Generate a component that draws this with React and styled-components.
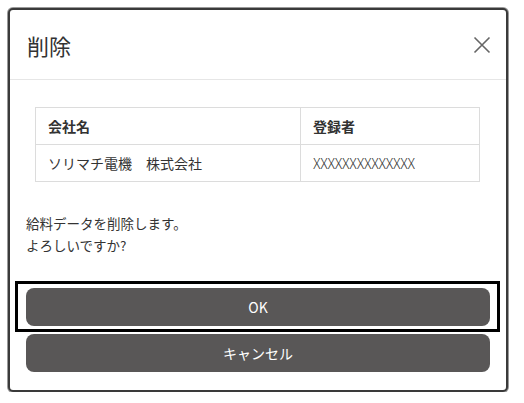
import React from 'react';
import styled, { createGlobalStyle } from 'styled-components';

const GlobalStyle = createGlobalStyle`
    html, body {
        margin: 0;
        padding: 0;
        background: #fff;
        font-family: "Noto Sans CJK JP", "Noto Sans", sans-serif;
        color: #333;
    }
`;

const Modal = styled.div`
    box-sizing: border-box;
    width: 500px;
    margin: 8px 0 0 8px;
    border: 2px solid #3a3a3a;
    border-radius: 5px;
    box-shadow: 0 0 0 1px #9a9a9a;
    background: #fff;
`;

const Header = styled.div`
    display: flex;
    align-items: center;
    justify-content: space-between;
    height: 69px;
    padding: 0 15px 0 17px;
    border-bottom: 1px solid #e6e6e6;
`;

const Title = styled.h2`
    margin: 0;
    font-size: 22px;
    font-weight: 400;
    color: #333;
`;

const CloseButton = styled.button`
    display: flex;
    padding: 0;
    border: none;
    background: none;
    cursor: pointer;
`;

const Body = styled.div`
    padding: 27px 16px 18px;
`;

const Table = styled.table`
    width: 445px;
    margin: 0 0 0 9px;
    border-collapse: collapse;
    font-size: 14px;
`;

const Th = styled.th`
    height: 36px;
    padding: 0 12px;
    border: 1px solid #dcdcdc;
    text-align: left;
    font-weight: 700;
    width: ${({ w }) => w || 'auto'};
`;

const Td = styled.td`
    height: 36px;
    padding: 0 12px;
    border: 1px solid #dcdcdc;
    font-weight: ${({ light }) => (light ? 300 : 400)};
    letter-spacing: ${({ light }) => (light ? '-0.3px' : '0')};
`;

const Message = styled.p`
    margin: 30px 0 32px;
    font-size: 13.5px;
    line-height: 22px;
`;

const Buttons = styled.div`
    display: flex;
    flex-direction: column;
    gap: 8px;
`;

const Button = styled.button`
    position: relative;
    height: 38px;
    border: none;
    border-radius: 8px;
    background: #595757;
    color: #fff;
    font-family: inherit;
    font-size: 14px;
    cursor: pointer;

    ${({ focused }) => focused && `
        &::after {
            content: '';
            position: absolute;
            top: -7px;
            bottom: -6px;
            left: -11px;
            right: -10px;
            border: 3px solid #000;
            pointer-events: none;
        }
    `}
`;

function DeleteDialog() {
    return (
        <Modal>
            <Header>
                <Title>削除</Title>
                <CloseButton aria-label="close">
                    <svg width="18" height="18" viewBox="0 0 18 18">
                        <path d="M1.5 1.5 L16.5 16.5 M16.5 1.5 L1.5 16.5" stroke="#666" strokeWidth="1.6" fill="none" />
                    </svg>
                </CloseButton>
            </Header>
            <Body>
                <Table>
                    <thead>
                        <tr>
                            <Th w="240px">会社名</Th>
                            <Th>登録者</Th>
                        </tr>
                    </thead>
                    <tbody>
                        <tr>
                            <Td>ソリマチ電機　株式会社</Td>
                            <Td light>XXXXXXXXXXXXXX</Td>
                        </tr>
                    </tbody>
                </Table>
                <Message>
                    給料データを削除します。<br />
                    よろしいですか?
                </Message>
                <Buttons>
                    <Button focused>OK</Button>
                    <Button>キャンセル</Button>
                </Buttons>
            </Body>
        </Modal>
    );
}

export default function App() {
    return (
        <>
            <GlobalStyle />
            <DeleteDialog />
        </>
    );
}
